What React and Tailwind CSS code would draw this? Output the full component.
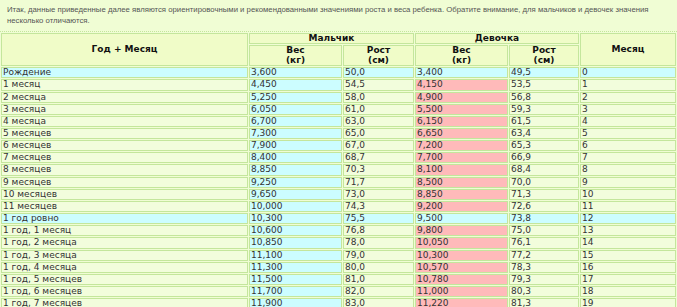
import React from 'react';

const rows = [
  ['Рождение', '3,600', '50,0', '3,400', '49,5', '0', true],
  ['1 месяц', '4,450', '54,5', '4,150', '53,5', '1'],
  ['2 месяца', '5,250', '58,0', '4,900', '56,8', '2'],
  ['3 месяца', '6,050', '61,0', '5,500', '59,3', '3'],
  ['4 месяца', '6,700', '63,0', '6,150', '61,5', '4'],
  ['5 месяцев', '7,300', '65,0', '6,650', '63,4', '5'],
  ['6 месяцев', '7,900', '67,0', '7,200', '65,3', '6'],
  ['7 месяцев', '8,400', '68,7', '7,700', '66,9', '7'],
  ['8 месяцев', '8,850', '70,3', '8,100', '68,4', '8'],
  ['9 месяцев', '9,250', '71,7', '8,500', '70,0', '9'],
  ['10 месяцев', '9,650', '73,0', '8,850', '71,3', '10'],
  ['11 месяцев', '10,000', '74,3', '9,200', '72,6', '11'],
  ['1 год ровно', '10,300', '75,5', '9,500', '73,8', '12', true],
  ['1 год, 1 месяц', '10,600', '76,8', '9,800', '75,0', '13'],
  ['1 год, 2 месяца', '10,850', '78,0', '10,050', '76,1', '14'],
  ['1 год, 3 месяца', '11,100', '79,0', '10,300', '77,2', '15'],
  ['1 год, 4 месяца', '11,300', '80,0', '10,570', '78,3', '16'],
  ['1 год, 5 месяцев', '11,500', '81,0', '10,780', '79,3', '17'],
  ['1 год, 6 месяцев', '11,700', '82,0', '11,000', '80,3', '18'],
  ['1 год, 7 месяцев', '11,900', '83,0', '11,220', '81,3', '19'],
];

const td = 'border border-[#c4e69c] px-[1px] py-0 leading-[9.15px] text-left font-normal';
const th = 'border border-[#c4e69c] bg-[#f0fcc8] px-[1px] py-0 leading-[9.4px] text-center font-bold text-[#111]';

export default function App() {
  return (
    <div className="min-h-screen bg-[#f0fdd4] text-[#333]" style={{ fontFamily: '"DejaVu Sans", Verdana, sans-serif' }}>
      <p className="pl-[7px] pt-[4px] pb-[5px] text-[7.75px] leading-[11px] text-[#555]" style={{ fontFamily: '"Liberation Sans", Arial, sans-serif' }}>
        <span className="whitespace-nowrap">Итак, данные приведенные далее являются ориентировочными и рекомендованными значениями роста и веса ребенка. Обратите внимание, для мальчиков и девочек значения</span>
        <br />
        несколько отличаются.
      </p>
      <table className="w-full border-separate border-spacing-[1px] border-t border-dotted border-[#c4e69c] text-[9px]">
        <thead>
          <tr>
            <th rowSpan={2} className={th + ' w-[247px]'}>Год + Месяц</th>
            <th colSpan={2} className={th}>Мальчик</th>
            <th colSpan={2} className={th}>Девочка</th>
            <th rowSpan={2} className={th}>Месяц</th>
          </tr>
          <tr>
            <th className={th + ' w-[93px]'}>Вес<br />(кг)</th>
            <th className={th + ' w-[71px]'}>Рост<br />(см)</th>
            <th className={th + ' w-[93px]'}>Вес<br />(кг)</th>
            <th className={th + ' w-[70px]'}>Рост<br />(см)</th>
          </tr>
        </thead>
        <tbody>
          {rows.map(([label, bw, bh, gw, gh, m, hl]) => {
            const plain = hl ? 'bg-[#ccfdff]' : 'bg-[#f2fddc]';
            return (
              <tr key={label}>
                <td className={td + ' ' + plain}>{label}</td>
                <td className={td + ' bg-[#ccfdff]'}>{bw}</td>
                <td className={td + ' ' + plain}>{bh}</td>
                <td className={td + ' ' + (hl ? 'bg-[#ccfdff]' : 'bg-[#ffbaba]')}>{gw}</td>
                <td className={td + ' ' + plain}>{gh}</td>
                <td className={td + ' ' + plain}>{m}</td>
              </tr>
            );
          })}
        </tbody>
      </table>
    </div>
  );
}
